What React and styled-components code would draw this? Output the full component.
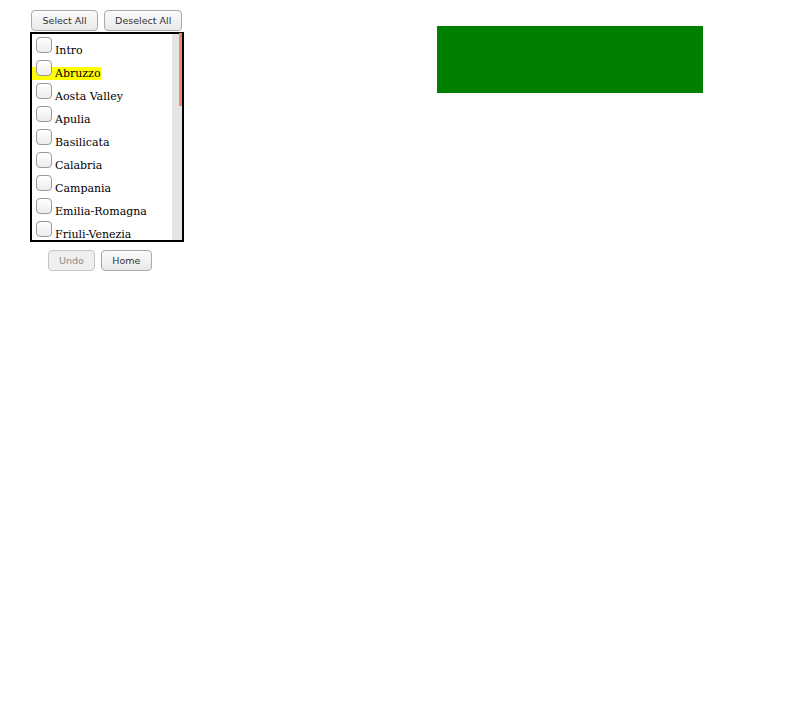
import React, { useState } from 'react'
import styled, { createGlobalStyle } from 'styled-components'

const GlobalStyle = createGlobalStyle`
    body {
        margin: 8px;
        background: #fff;
        font-family: "DejaVu Serif", serif;
    }
`;

const Page = styled.div`
    display: flex;
    align-items: flex-start;
    padding-left: 22px;
`;

const Sidebar = styled.div`
    width: 154px;
    display: flex;
    flex-direction: column;
`;

const ButtonRow = styled.div`
    display: flex;
    gap: 6px;
    padding-left: ${(p) => p.$indent || 0}px;
    margin-top: ${(p) => p.$top || 0}px;
`;

const Button = styled.button`
    height: 21px;
    padding: 0 ${(p) => p.$pad || 10}px;
    border: 1px solid #a9a9a9;
    border-radius: 4px;
    background: linear-gradient(#fbfbfb, #e9e9e9);
    color: #333;
    font-family: "DejaVu Sans", sans-serif;
    font-size: 9.5px;
    cursor: pointer;
    &:disabled {
        color: #8a8a8a;
        border-color: #c4c4c4;
        background: #efefef;
        cursor: default;
    }
`;

const List = styled.div`
    margin-top: 1px;
    height: 206px;
    border: 2px solid #000;
    display: flex;
`;

const Items = styled.div`
    flex: 1;
    overflow: hidden;
    padding-right: 6px;
`;

const Track = styled.div`
    width: 10px;
    background: #e5e5e5;
    display: flex;
    justify-content: flex-end;
    align-items: flex-start;
`;

const Thumb = styled.div`
    width: 3px;
    height: 73px;
    margin-top: -1px;
    background: #f08b62;
`;

const Row = styled.div`
    font-size: 11px;
    color: #000;
`;

const Mark = styled.span`
    background: ${(p) => (p.$on ? '#ffff00' : 'transparent')};
`;

const Check = styled.input`
    appearance: none;
    width: 16px;
    height: 16px;
    margin: 3px 3px 3px 4px;
    vertical-align: -2px;
    border: 1px solid #9a9a9a;
    border-radius: 4px;
    background: linear-gradient(#ffffff, #ececec);
    &:checked {
        background: #5b9bd5;
    }
`;

const Banner = styled.div`
    margin-left: 253px;
    margin-top: 18px;
    width: 266px;
    height: 67px;
    background: #008000;
`;

const regions = [
    'Intro', 'Abruzzo', 'Aosta Valley', 'Apulia', 'Basilicata', 'Calabria',
    'Campania', 'Emilia-Romagna', 'Friuli-Venezia Giulia', 'Lazio', 'Liguria',
    'Lombardy', 'Marche', 'Molise', 'Piedmont', 'Sardinia', 'Sicily',
    'Trentino-Alto Adige', 'Tuscany', 'Umbria', 'Veneto',
];

const App = () => {
    const [checked, setChecked] = useState({});
    const toggle = (name) => setChecked({ ...checked, [name]: !checked[name] });
    const setAll = (v) => setChecked(Object.fromEntries(regions.map((r) => [r, v])));

    return (
        <>
            <GlobalStyle />
            <Page>
                <Sidebar>
                    <ButtonRow $indent={1} $top={2}>
                        <Button $pad={10.5} onClick={() => setAll(true)}>Select All</Button>
                        <Button $pad={10} onClick={() => setAll(false)}>Deselect All</Button>
                    </ButtonRow>
                    <List>
                        <Items>
                            {regions.map((r) => (
                                <Row key={r}>
                                    <Mark $on={r === 'Abruzzo'}>
                                        <Check type="checkbox" checked={!!checked[r]} onChange={() => toggle(r)} />
                                        {r}
                                    </Mark>
                                </Row>
                            ))}
                        </Items>
                        <Track>
                            <Thumb />
                        </Track>
                    </List>
                    <ButtonRow $indent={18} $top={8}>
                        <Button $pad={10} disabled>Undo</Button>
                        <Button $pad={10.5}>Home</Button>
                    </ButtonRow>
                </Sidebar>
                <Banner />
            </Page>
        </>
    )
}

export default App;
